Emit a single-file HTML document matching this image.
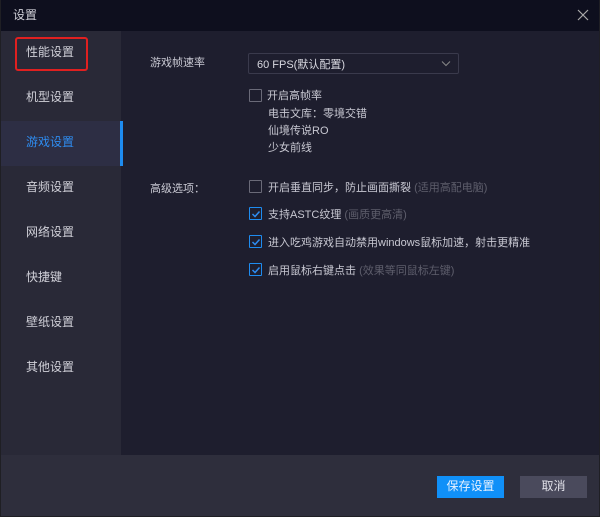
<!DOCTYPE html>
<html><head><meta charset="utf-8"><style>
*{margin:0;padding:0;box-sizing:border-box}
body{width:600px;height:517px;background:#1f1f24;font-family:"Liberation Sans","Noto Sans CJK SC",sans-serif;font-size:11px;color:#c8c8d2;position:relative;overflow:hidden}
.win{position:absolute;left:1px;top:0;width:598px;height:516px;background:#1e1e2e}
.title{position:absolute;left:0;top:0;width:598px;height:31px;background:#0e0f1e;color:#d0d0d8;font-size:12px;line-height:31px;padding-left:12px}
.close{position:absolute;right:10px;top:9px;width:12px;height:12px}
.side{position:absolute;left:0;top:31px;width:120px;height:424px;background:#292937}
.item{position:absolute;left:0;width:120px;height:45px;line-height:43px;padding-left:25px;font-size:12px;color:#d0d0d8}
.sel{background:#2d2e44;color:#2e8cf0}
.sel:after{content:"";position:absolute;right:-2px;top:0;width:3px;height:45px;background:#1e8cf0}
.red{position:absolute;left:14px;top:37px;width:73px;height:34px;border:2px solid #e02020;border-radius:3px}
.footer{position:absolute;left:0;top:455px;width:598px;height:61px;background:#2e2e3c}
.btn{position:absolute;top:476px;height:22px;line-height:21px;text-align:center;font-size:12px;width:67px}
.t{position:absolute;white-space:nowrap}
.cb{position:absolute;width:13px;height:13px;border:1px solid #6a6a78;border-radius:1px}
.cb.on{border-color:#1e8cf0}
.cb.on svg{position:absolute;left:1px;top:1px}
.g{color:#5e5e6c}
</style></head><body>
<div class="win">
<div class="title">设置</div>
<svg class="close" viewBox="0 0 12 12"><path d="M1 1L11 11M11 1L1 11" stroke="#aaa" stroke-width="1.2"/></svg>
<div class="side">
<div class="item" style="top:0">性能设置</div>
<div class="item" style="top:45px">机型设置</div>
<div class="item sel" style="top:90px">游戏设置</div>
<div class="item" style="top:135px">音频设置</div>
<div class="item" style="top:180px">网络设置</div>
<div class="item" style="top:225px">快捷键</div>
<div class="item" style="top:270px">壁纸设置</div>
<div class="item" style="top:315px">其他设置</div>
</div>
<div class="red"></div>
<div class="t" style="left:149px;top:54px;font-size:11px">游戏帧速率</div>
<div style="position:absolute;left:247px;top:53px;width:211px;height:21px;border:1px solid #3a3a4c;background:#1e1e2e;border-radius:2px"></div>
<div class="t" style="left:256px;top:56px;color:#d8d8e0">60 FPS(默认配置)</div>
<svg style="position:absolute;left:440px;top:60px" width="10" height="7" viewBox="0 0 10 7"><path d="M1 1.5L5 5.5L9 1.5" stroke="#888" fill="none"/></svg>
<div class="cb" style="left:248px;top:89px"></div>
<div class="t" style="left:266px;top:87px">开启高帧率</div>
<div class="t" style="left:267px;top:105px">电击文库：零境交错</div>
<div class="t" style="left:267px;top:122px">仙境传说RO</div>
<div class="t" style="left:267px;top:139px">少女前线</div>
<div class="t" style="left:149px;top:180px">高级选项：</div>
<div class="cb" style="left:248px;top:180px"></div>
<div class="t" style="left:267px;top:179px">开启垂直同步，防止画面撕裂 <span class="g">(适用高配电脑)</span></div>
<div class="cb on" style="left:248px;top:207px"><svg width="10" height="10" viewBox="0 0 10 10"><path d="M1.5 5L4 7.5L8.5 2.5" stroke="#2e8cf0" stroke-width="1.5" fill="none"/></svg></div>
<div class="t" style="left:267px;top:206px">支持ASTC纹理 <span class="g">(画质更高清)</span></div>
<div class="cb on" style="left:248px;top:235px"><svg width="10" height="10" viewBox="0 0 10 10"><path d="M1.5 5L4 7.5L8.5 2.5" stroke="#2e8cf0" stroke-width="1.5" fill="none"/></svg></div>
<div class="t" style="left:267px;top:234px">进入吃鸡游戏自动禁用windows鼠标加速，射击更精准</div>
<div class="cb on" style="left:248px;top:263px"><svg width="10" height="10" viewBox="0 0 10 10"><path d="M1.5 5L4 7.5L8.5 2.5" stroke="#2e8cf0" stroke-width="1.5" fill="none"/></svg></div>
<div class="t" style="left:267px;top:262px">启用鼠标右键点击 <span class="g">(效果等同鼠标左键)</span></div>
<div class="footer"></div>
<div class="btn" style="left:436px;background:#1090f8;color:#e8f2ff">保存设置</div>
<div class="btn" style="left:519px;background:#4a4a5c;color:#e0e0e8">取消</div>
</div>
</body></html>
